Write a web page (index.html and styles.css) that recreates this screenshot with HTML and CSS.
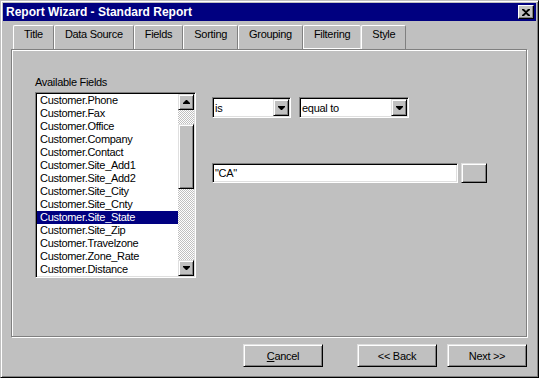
FILE: index.html
```html
<!DOCTYPE html>
<html lang="en">
<head>
<meta charset="UTF-8" />
<title>Report Wizard - Standard Report</title>
<link rel="stylesheet" href="styles.css">
</head>
<body>

<div class="window">
  <div class="titlebar">
    <span class="title">Report Wizard - Standard Report</span>
    <div class="close">
      <svg width="8" height="7" viewBox="0 0 8 7"><path d="M0 0h2l2 2 2-2h2v1L5 3.5 8 6v1H6L4 5 2 7H0V6l3-2.5L0 1z" fill="#000"/></svg>
    </div>
  </div>

  <div class="tabs">
    <div class="tab">Title</div>
    <div class="tab">Data Source</div>
    <div class="tab">Fields</div>
    <div class="tab">Sorting</div>
    <div class="tab">Grouping</div>
    <div class="tab active">Filtering</div>
    <div class="tab">Style</div>
  </div>

  <div class="panel">
    <div class="fields">
      <div class="label">Available Fields</div>
      <div class="listbox">
        <ul class="items">
          <li>Customer.Phone</li>
          <li>Customer.Fax</li>
          <li>Customer.Office</li>
          <li>Customer.Company</li>
          <li>Customer.Contact</li>
          <li>Customer.Site_Add1</li>
          <li>Customer.Site_Add2</li>
          <li>Customer.Site_City</li>
          <li>Customer.Site_Cnty</li>
          <li class="selected">Customer.Site_State</li>
          <li>Customer.Site_Zip</li>
          <li>Customer.Travelzone</li>
          <li>Customer.Zone_Rate</li>
          <li>Customer.Distance</li>
        </ul>
        <div class="scrollbar">
          <div class="sb-btn">
            <svg width="7" height="4" viewBox="0 0 7 4"><path d="M3 0h1l3 3v1H0V3z" fill="#000"/></svg>
          </div>
          <div class="track"><div class="thumb"></div></div>
          <div class="sb-btn">
            <svg width="7" height="4" viewBox="0 0 7 4"><path d="M0 0h7v1L4 4H3L0 1z" fill="#000"/></svg>
          </div>
        </div>
      </div>
    </div>

    <div class="filter">
      <div class="combos">
        <div class="combo small">
          <span class="combo-text">is</span>
          <div class="drop"><svg width="7" height="4" viewBox="0 0 7 4"><path d="M0 0h7v1L4 4H3L0 1z" fill="#000"/></svg></div>
        </div>
        <div class="combo wide">
          <span class="combo-text">equal to</span>
          <div class="drop"><svg width="7" height="4" viewBox="0 0 7 4"><path d="M0 0h7v1L4 4H3L0 1z" fill="#000"/></svg></div>
        </div>
      </div>
      <div class="value-row">
        <div class="textbox">"CA"</div>
        <div class="browse"></div>
      </div>
    </div>
  </div>

  <div class="actions">
    <div class="btn cancel"><u>C</u>ancel</div>
    <div class="btn">&lt;&lt; Back</div>
    <div class="btn">Next &gt;&gt;</div>
  </div>
</div>

</body>
</html>
```

FILE: styles.css
```css
body {
  margin: 0;
  font-family: "Liberation Sans", Arial, sans-serif;
  font-size: 11px;
  letter-spacing: -0.3px;
  color: #000;
  background: #c0c0c0;
}

.window {
  width: 539px;
  height: 378px;
  box-sizing: border-box;
  padding: 2px;
  background: #c0c0c0;
  border: 1px solid;
  border-color: #c0c0c0 #000 #000 #c0c0c0;
  box-shadow: inset 1px 1px 0 #fff, inset -1px -1px 0 #808080;
}

/* title bar */
.titlebar {
  height: 18px;
  background: #000080;
  display: flex;
  align-items: center;
  justify-content: space-between;
  padding: 0 2px 0 3px;
}

.title {
  color: #fff;
  font-weight: bold;
  font-size: 12px;
  letter-spacing: 0;
}

.close {
  width: 16px;
  height: 14px;
  box-sizing: border-box;
  background: #c0c0c0;
  border: 1px solid;
  border-color: #fff #000 #000 #fff;
  box-shadow: inset -1px -1px 0 #808080;
  display: flex;
  align-items: center;
  justify-content: center;
}

/* tabs */
.tabs {
  display: flex;
  margin: 4px 0 0 10px;
  height: 24px;
}

.tab {
  box-sizing: border-box;
  height: 24px;
  padding: 2px 10px 0;
  line-height: 13px;
  border-top: 1px solid #fff;
  border-left: 1px solid #fff;
  border-right: 1px solid #808080;
  border-radius: 2px 2px 0 0;
}

.tab.active {
  border: 1px solid #fff;
  border-right-color: #dfdfdf;
}

/* tab page */
.panel {
  margin-left: 8px;
  width: 516px;
  height: 288px;
  box-sizing: border-box;
  border: 1px solid #808080;
  box-shadow: 1px 1px 0 #fff, inset 1px 1px 0 #fff;
  padding: 26px 0 0 23px;
  display: flex;
  align-items: flex-start;
}

.label {
  line-height: 13px;
  margin-bottom: 3px;
}

.listbox {
  width: 161px;
  height: 186px;
  box-sizing: border-box;
  padding: 1px;
  display: flex;
  border: 1px solid;
  border-color: #808080 #fff #fff #808080;
  box-shadow: inset 1px 1px 0 #000, inset -1px -1px 0 #dfdfdf;
}

.items {
  list-style: none;
  margin: 0;
  padding: 0;
  width: 141px;
  background: #fff;
}

.items li {
  height: 13px;
  line-height: 13px;
  padding-left: 3px;
  white-space: nowrap;
}

.items li.selected {
  background: #000080;
  color: #fff;
}

.scrollbar {
  width: 16px;
  display: flex;
  flex-direction: column;
}

.sb-btn,
.drop,
.thumb,
.browse,
.btn {
  box-sizing: border-box;
  background: #c0c0c0;
  border: 1px solid;
  border-color: #dfdfdf #000 #000 #dfdfdf;
  box-shadow: inset 1px 1px 0 #fff, inset -1px -1px 0 #808080;
}

.sb-btn {
  height: 16px;
  display: flex;
  align-items: center;
  justify-content: center;
}

.track {
  flex: 1;
  background: repeating-conic-gradient(#fff 0 25%, #c0c0c0 0 50%) 0 0 / 2px 2px;
}

.thumb {
  height: 65px;
  margin-top: 14px;
}

/* filter controls */
.filter {
  margin: 21px 0 0 16px;
}

.combos {
  display: flex;
  gap: 8px;
}

.combo,
.textbox {
  box-sizing: border-box;
  background: #fff;
  padding: 1px;
  display: flex;
  align-items: center;
  border: 1px solid;
  border-color: #808080 #fff #fff #808080;
  box-shadow: inset 1px 1px 0 #000, inset -1px -1px 0 #dfdfdf;
}

.combo {
  height: 21px;
}

.combo.small {
  width: 79px;
}

.combo.wide {
  width: 110px;
}

.combo-text {
  flex: 1;
  padding-left: 1px;
}

.drop {
  width: 16px;
  height: 17px;
  display: flex;
  align-items: center;
  justify-content: center;
}

.value-row {
  display: flex;
  gap: 3px;
  margin-top: 45px;
}

.textbox {
  width: 246px;
  height: 20px;
  padding-left: 2px;
}

.browse {
  width: 26px;
  height: 20px;
}

/* dialog buttons */
.actions {
  display: flex;
  justify-content: flex-end;
  gap: 10px;
  margin-top: 7px;
  padding-right: 9px;
}

.btn {
  width: 80px;
  height: 23px;
  display: flex;
  align-items: center;
  justify-content: center;
}

.btn.cancel {
  margin-right: 24px;
}
```
